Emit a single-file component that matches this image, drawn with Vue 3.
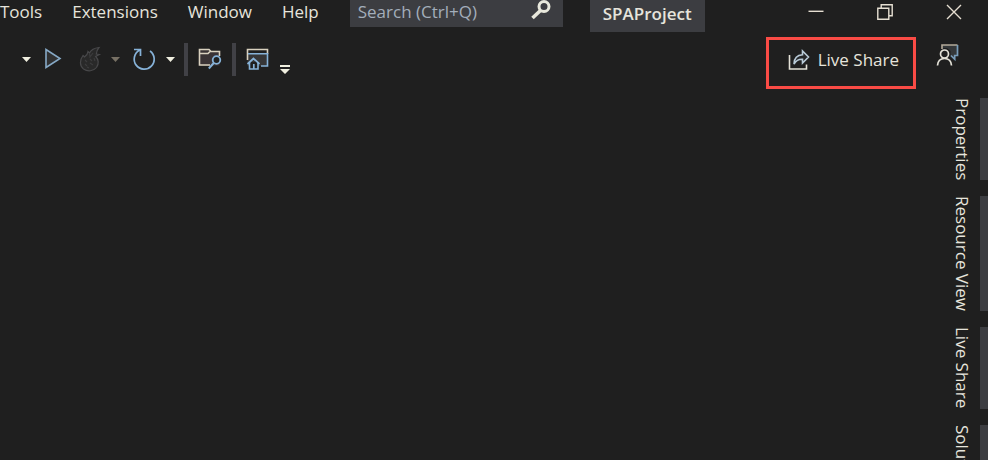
<script setup>
const menus = ['Tools', 'Extensions', 'Window', 'Help']
const tabs = ['Properties', 'Resource View', 'Live Share', 'Solution Explorer']
</script>

<template>
  <div class="ide">
    <header class="titlebar">
      <nav class="menus" aria-label="Main menu">
        <button v-for="menu in menus" :key="menu" type="button">{{ menu }}</button>
      </nav>
      <label class="search">
        <input type="search" placeholder="Search (Ctrl+Q)" aria-label="Search (Ctrl+Q)" />
        <svg width="20" height="20" viewBox="0 0 20 20" aria-hidden="true">
          <circle cx="13" cy="6.500" r="5" fill="none" stroke="#e8e8dc" stroke-width="3" />
          <path d="M9.500 10.500 1.500 18" fill="none" stroke="#e8e8dc" stroke-width="3.600" />
        </svg>
      </label>
      <h1 class="project">SPAProject</h1>
      <div class="window-controls">
        <button type="button" aria-label="Minimize">
          <svg width="16" height="16" viewBox="0 0 16 16"><path d="M.5 7.300h15" /></svg>
        </button>
        <button type="button" aria-label="Restore">
          <svg width="16" height="16" viewBox="0 0 16 16"><path d="M.8 4.200h11v11H.8zM4.200 4V.8h11v11H12" /></svg>
        </button>
        <button type="button" aria-label="Close">
          <svg width="16" height="16" viewBox="0 0 16 16"><path d="m1 1 14 14M15 1 1 15" /></svg>
        </button>
      </div>
    </header>

    <div class="toolbar">
      <button type="button" class="caret" aria-label="Start options">
        <svg width="9" height="5" viewBox="0 0 9 5"><path d="M0 0h9L4.500 5z" fill="#f0efe0" /></svg>
      </button>
      <button type="button" class="tool" aria-label="Start without debugging">
        <svg width="24" height="24" viewBox="0 0 24 24">
          <path d="M5 2.500v18l14-9z" fill="#303132" stroke="#86a9c6" stroke-width="1.600" />
        </svg>
      </button>
      <button type="button" class="tool flame" aria-label="Hot reload" disabled>
        <svg width="24" height="26" viewBox="0 0 24 26">
          <path d="M20 1.500c-5 .5-8 2.500-9.500 5.500L9 5.500c-.2 2.500-1.500 4-3.500 5.500L4 9.500C.5 14 .5 20 4.500 23c4 2.800 10 2.300 13-1.500 2.600-3.500 2.200-8-.8-11l3.600-2-3-.5c.2-2.500 1.200-4.700 2.700-6.500z" fill="#292929" stroke="#48484a" stroke-width="1.200" />
          <path d="m10.500 7 .5 4 3-4M6 14l2 2m3-3 2 2m-7 3 2 2m3-3 3 2m1-7 1 3m-8 6 2 1" fill="none" stroke="#3c3c3d" stroke-width="1.200" />
        </svg>
      </button>
      <button type="button" class="caret" aria-label="Hot reload options" disabled>
        <svg width="9" height="5" viewBox="0 0 9 5"><path d="M0 0h9L4.500 5z" fill="#777064" /></svg>
      </button>
      <button type="button" class="tool restart" aria-label="Restart">
        <svg width="24" height="26" viewBox="0 0 24 26">
          <path d="M7.500 4.300A10 10 0 1 0 18 5M2 3.500h6.500v6.500" fill="none" stroke="#86b2d8" stroke-width="1.700" />
        </svg>
      </button>
      <button type="button" class="caret" aria-label="Restart options">
        <svg width="9" height="5" viewBox="0 0 9 5"><path d="M0 0h9L4.500 5z" fill="#f0efe0" /></svg>
      </button>
      <span class="separator"></span>
      <button type="button" class="tool" aria-label="Find in files">
        <svg width="24" height="24" viewBox="0 0 24 24">
          <path d="M1.500 2.500h9.500l2 2h8.500v14h-20z" fill="#3a3335" />
          <path d="M21.500 9V4.500h-8.500l-2-2H1.500v15.500H12M1.500 6.500H10l2-2" fill="none" stroke="#d9d1bf" stroke-width="1.600" />
          <circle cx="18.500" cy="13" r="3.800" fill="#202020" stroke="#86b2d8" stroke-width="1.800" />
          <path d="m15.800 16-5 5.500" stroke="#86b2d8" stroke-width="2" />
        </svg>
      </button>
      <span class="separator"></span>
      <button type="button" class="tool" aria-label="Home window">
        <svg width="24" height="24" viewBox="0 0 24 24">
          <path d="M1.500 6.500h20V19h-20z" fill="#363637" />
          <path d="M1.500 13V2.500h20V7" fill="none" stroke="#d9d1bf" stroke-width="1.600" />
          <path d="M2 6.800h19.500V19H15" fill="none" stroke="#86b2d8" stroke-width="1.600" />
          <path d="M3.500 15v7h8.500v-7" fill="#202020" stroke="#86b2d8" stroke-width="1.600" />
          <path d="m1.500 17 6-5.500 6 5.500M7.800 22v-5" fill="none" stroke="#86b2d8" stroke-width="1.700" />
        </svg>
      </button>
      <button type="button" class="overflow" aria-label="Toolbar options">
        <svg width="10" height="9" viewBox="0 0 10 9"><path d="M0 0h10v2H0zM0 4h10L5 9z" fill="#f0efe0" /></svg>
      </button>

      <button type="button" class="live-share">
        <svg width="22" height="22" viewBox="0 0 22 22" aria-hidden="true">
          <path d="M1.500 6v14h17v-4.500" fill="none" stroke="#e4e2d8" stroke-width="1.600" />
          <path d="M6 15c.2-5.500 3-9 8.500-9.200V2l6 6-6 6v-3.800C10.500 10 8 11.500 6 15z" fill="#252729" stroke="#b9cbd8" stroke-width="1.600" />
        </svg>
        Live Share
      </button>
      <button type="button" class="feedback" aria-label="Send feedback">
        <svg width="24" height="24" viewBox="0 0 24 24">
          <path d="M6 2h15.500v10.500H19v3.800L14.500 13V8L11 5H6z" fill="#35383a" />
          <path d="M6 6V2h15.500" fill="none" stroke="#b4aa9a" stroke-width="1.600" />
          <path d="M21.500 2v10.500h-2.800v3.800l-3.800-3.800" fill="none" stroke="#789cb9" stroke-width="1.700" />
          <circle cx="8.500" cy="11" r="4" fill="#202020" stroke="#e4e2d8" stroke-width="1.700" />
          <path d="M1.500 22.500c.3-4.500 3-7 7-7s6.700 2.500 7 7" fill="none" stroke="#e4e2d8" stroke-width="1.700" />
        </svg>
      </button>
    </div>

    <main class="workspace">
      <section class="editor" aria-label="Editor"></section>
      <aside class="tabs" aria-label="Tool windows">
        <button v-for="tab in tabs" :key="tab" type="button">{{ tab }}</button>
      </aside>
    </main>
  </div>
</template>

<style>
body {
  background: #1f1f1f;
}
</style>

<style scoped>
.ide {
  display: flex;
  flex-direction: column;
  height: 100vh;
  overflow: hidden;
  background: #1f1f1f;
  color: #e6e4dc;
  font-family: "Open Sans", "Noto Sans", sans-serif;
  font-size: 17px;
  line-height: 24px;
}
button {
  flex: none;
  padding: 0;
  border: 0;
  background: none;
  color: inherit;
  font: inherit;
  white-space: nowrap;
}
svg {
  display: block;
  flex: none;
}
.titlebar {
  display: flex;
  align-items: flex-start;
  flex: none;
  height: 34px;
}
.menus {
  display: flex;
  flex: none;
  gap: 30px;
  margin-right: 31px;
}
.search {
  display: flex;
  flex: none;
  box-sizing: border-box;
  width: 213px;
  height: 27px;
  padding: 0 12px 0 8px;
  background: #3c3d41;
}
.search input {
  flex: 1;
  min-width: 0;
  height: 24px;
  padding: 0;
  border: 0;
  outline: 0;
  background: none;
  color: inherit;
  font: inherit;
}
.search input::placeholder {
  color: #a3aebb;
  opacity: 1;
}
.project {
  box-sizing: border-box;
  flex: none;
  height: 32px;
  margin: 0 0 0 27px;
  padding: 2px 13px;
  background: #3c3d41;
  font-size: 17px;
  font-weight: 600;
  line-height: 24px;
}
.window-controls {
  display: flex;
  margin-left: auto;
}
.window-controls button {
  display: flex;
  align-items: center;
  justify-content: center;
  width: 69px;
  height: 24px;
}
.window-controls path {
  fill: none;
  stroke: #e6dfd2;
  stroke-width: 1.4;
}
.toolbar {
  display: flex;
  align-items: center;
  flex: none;
  height: 56px;
  padding: 0 28px 6px 22px;
  box-sizing: border-box;
}
.tool {
  margin: 0 10px;
}
.flame {
  margin-left: 4px;
  margin-right: 8px;
}
.restart {
  margin-left: 12px;
}
.separator {
  flex: none;
  width: 4px;
  height: 33px;
  margin-left: 9px;
  background: #414146;
}
.tool + .separator {
  margin-left: 0;
}
.overflow {
  padding-top: 20px;
}
.live-share {
  display: flex;
  align-items: center;
  gap: 8px;
  box-sizing: border-box;
  height: 52px;
  margin-top: 8px;
  margin-left: auto;
  padding: 0 14px 6px 19px;
  border: 3px solid #fa4b45;
}
.feedback {
  margin-left: 20px;
  padding-bottom: 8px;
}
.workspace {
  display: flex;
  flex: 1;
  min-height: 0;
}
.editor {
  flex: 1;
}
.tabs {
  display: flex;
  flex: none;
  flex-direction: column;
  gap: 16px;
  padding-top: 8px;
}
.tabs button {
  padding-right: 6px;
  border-right: 8px solid #3c3d41;
  writing-mode: vertical-rl;
}
</style>
